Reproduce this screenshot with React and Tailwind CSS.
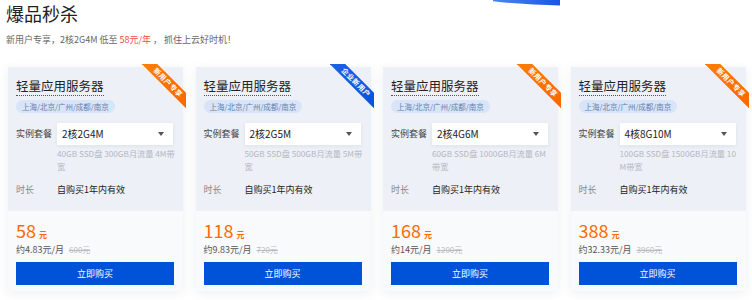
const plans = [
  {
    badge: '新用户专享',
    badgeColor: 'orange',
    spec: '2核2G4M',
    desc: ['40GB SSD盘 300GB月流量 4M带', '宽'],
    price: '58',
    monthly: '约4.83元/月',
    original: '600元',
  },
  {
    badge: '企业新用户',
    badgeColor: 'blue',
    spec: '2核2G5M',
    desc: ['50GB SSD盘 500GB月流量 5M带', '宽'],
    price: '118',
    monthly: '约9.83元/月',
    original: '720元',
  },
  {
    badge: '新用户专享',
    badgeColor: 'orange',
    spec: '2核4G6M',
    desc: ['60GB SSD盘 1000GB月流量 6M', '带宽'],
    price: '168',
    monthly: '约14元/月',
    original: '1200元',
  },
  {
    badge: '新用户专享',
    badgeColor: 'orange',
    spec: '4核8G10M',
    desc: ['100GB SSD盘 1500GB月流量 10', 'M带宽'],
    price: '388',
    monthly: '约32.33元/月',
    original: '3960元',
  },
];

function Ribbon({ text, color }) {
  const band =
    color === 'blue'
      ? 'bg-gradient-to-r from-[#1f63e6] to-[#0052d9]'
      : 'bg-gradient-to-r from-[#ff8000] to-[#f86400]';
  return (
    <div className="absolute -top-[3px] -right-[3px] w-[44px] h-[44px] overflow-hidden">
      <div
        className={`absolute left-[-12px] top-[12.5px] w-[76px] h-[11px] rotate-45 ${band} text-white text-[7px] leading-[11px] font-bold text-center tracking-[0.5px]`}
      >
        {text}
      </div>
    </div>
  );
}

function PlanCard({ plan }) {
  return (
    <div className="relative w-[175px] h-[224px] flex flex-col shadow-[0_2px_10px_rgba(30,50,90,0.08)]">
      <div className="bg-[#edf0f6] pl-2 pr-[10px] pt-[10px] pb-[14px]">
        <div className="flex">
          <div className="text-[12.5px] leading-[18px] text-[#222] border-b border-dotted border-[#555]">
            轻量应用服务器
          </div>
        </div>
        <div className="mt-[4px] flex">
          <div className="rounded-full bg-[#d8e4f8] px-[6px] h-[13px] text-[7.5px] leading-[13px] text-[#6580ad]">
            上海/北京/广州/成都/南京
          </div>
        </div>

        <div className="mt-[10px] flex items-center h-[22px]">
          <div className="w-[41px] text-[9px] leading-[12px] text-[#444]">实例套餐</div>
          <div className="flex-1 h-[22px] bg-white flex items-center justify-between pl-[5px] pr-[9px] shadow-[0_1px_4px_rgba(30,50,90,0.08)]">
            <span className="text-[10px] leading-[12px] text-[#222]">{plan.spec}</span>
            <span className="w-0 h-0 border-x-[3px] border-x-transparent border-t-[4px] border-t-[#555]" />
          </div>
        </div>
        <div className="mt-[2px] pl-[41px] text-[8.2px] leading-[13px] text-[#b3b8c2]">
          {plan.desc.map((line) => (
            <div key={line} className="whitespace-nowrap">
              {line}
            </div>
          ))}
        </div>

        <div className="mt-[10px] flex items-center h-[14px] leading-[14px]">
          <div className="w-[41px] text-[9px] text-[#888]">时长</div>
          <div className="text-[9px] text-[#222]">自购买1年内有效</div>
        </div>
      </div>

      <div className="flex-1 bg-[#f9fafc] pl-2 pr-[9px] pt-[8px]">
        <div className="flex items-baseline h-[22px] text-[#ff6a00] leading-[22px]">
          <span className="text-[18px]">{plan.price}</span>
          <span className="ml-[3px] text-[8px] font-bold">元</span>
        </div>
        <div className="mt-[3px] flex items-center h-[12px] text-[9px] leading-[12px]">
          <span className="text-[#555]">{plan.monthly}</span>
          <span className="ml-[5px] text-[8px] text-[#bbb] line-through">{plan.original}</span>
        </div>
        <button className="mt-[6px] w-full h-[23px] bg-[#0052d9] text-white text-[9px] leading-[12px] flex items-center justify-center">
          立即购买
        </button>
      </div>

      <Ribbon text={plan.badge} color={plan.badgeColor} />
    </div>
  );
}

export default function App() {
  return (
    <div
      className="relative w-[752px] h-[300px] bg-white overflow-hidden pl-[6px] pt-[1px]"
      style={{ fontFamily: '"Noto Sans CJK SC", "Noto Sans", sans-serif' }}
    >
      <svg className="absolute top-0 left-[490px]" width="74" height="8" viewBox="0 0 74 8">
        <defs>
          <linearGradient id="swoosh" x1="0" x2="1" y1="0" y2="0">
            <stop offset="0" stopColor="#4a86f2" />
            <stop offset="1" stopColor="#1b55e2" />
          </linearGradient>
        </defs>
        <path d="M3 0 H70 V5.5 Q36 5 3 1.2 Z" fill="url(#swoosh)" />
      </svg>

      <h1 className="text-[18px] leading-[24px] text-[#222] font-normal">爆品秒杀</h1>
      <p className="mt-[8px] text-[9px] leading-[14px] text-[#666]">
        新用户专享，2核2G4M 低至 <span className="text-[#f5484a]">58元/年</span> ， 抓住上云好时机！
      </p>

      <div className="mt-[20px] ml-[2px] flex gap-[12.5px]">
        {plans.map((plan) => (
          <PlanCard key={plan.spec} plan={plan} />
        ))}
      </div>
    </div>
  );
}
